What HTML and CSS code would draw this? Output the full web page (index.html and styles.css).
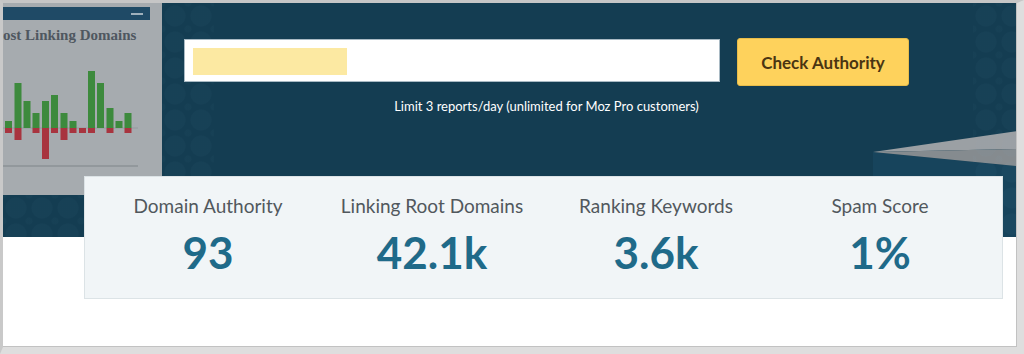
FILE: index.html
```html
<!DOCTYPE html>
<html lang="en">
<head>
<meta charset="utf-8">
<title>Domain Authority Checker</title>
<link rel="stylesheet" href="styles.css">
</head>
<body>
<div class="frame">
  <div class="page">
    <section class="banner">
      <svg class="banner-art" viewBox="3 3 1013 234" width="1013" height="234" aria-hidden="true">
        <polygon points="873,152 1017,166 1017,237 873,237" fill="#17445c"/>
        <polygon points="873,152 1017,131 1017,149" fill="#9ba0a4"/>
        <polygon points="873,152 1017,149 1017,166" fill="#858b8f"/>
      </svg>
      <div class="pattern pattern-left"></div>
      <div class="pattern pattern-under"></div>
      <div class="pattern pattern-right"></div>

      <div class="chart-panel">
        <div class="chart-head"><span class="chart-dash"></span></div>
        <div class="chart-title">ost Linking Domains</div>
        <svg class="chart" viewBox="3 42 159 153" width="159" height="153" aria-hidden="true">
          <line x1="3" y1="128" x2="138" y2="128" stroke="#959a9e" stroke-width="1"/>
          <g fill="#3d8a3d">
            <rect x="5" y="121" width="7" height="7"/>
            <rect x="14.5" y="83" width="7" height="45"/>
            <rect x="23.5" y="101" width="7" height="27"/>
            <rect x="32.5" y="113" width="7" height="15"/>
            <rect x="42" y="101" width="7" height="27"/>
            <rect x="51" y="95" width="7" height="33"/>
            <rect x="60.5" y="113" width="7" height="15"/>
            <rect x="69.5" y="121" width="7" height="7"/>
            <rect x="88" y="71" width="7" height="57"/>
            <rect x="97" y="83" width="7" height="45"/>
            <rect x="106.5" y="108" width="7" height="20"/>
            <rect x="115.5" y="121" width="7" height="7"/>
            <rect x="124.5" y="113" width="7" height="15"/>
          </g>
          <g fill="#a8343f">
            <rect x="5" y="128" width="7" height="5"/>
            <rect x="14.5" y="128" width="7" height="12"/>
            <rect x="32.5" y="128" width="7" height="5"/>
            <rect x="42" y="128" width="7" height="31"/>
            <rect x="51" y="128" width="7" height="5"/>
            <rect x="60.5" y="128" width="7" height="12"/>
            <rect x="69.5" y="128" width="7" height="5"/>
            <rect x="79" y="128" width="7" height="5"/>
            <rect x="88" y="128" width="7" height="5"/>
            <rect x="106.5" y="128" width="7" height="5"/>
            <rect x="124.5" y="128" width="7" height="5"/>
          </g>
          <line x1="3" y1="166" x2="138" y2="166" stroke="#7f8589" stroke-width="1"/>
        </svg>
      </div>

      <div class="search">
        <div class="search-row">
          <div class="search-input"><span class="redacted"></span></div>
          <button class="check-btn" type="button">Check Authority</button>
        </div>
        <p class="limit-note">Limit 3 reports/day (unlimited for Moz Pro customers)</p>
      </div>
    </section>

    <section class="metrics">
      <div class="metric">
        <div class="metric-label">Domain Authority</div>
        <div class="metric-value">93</div>
      </div>
      <div class="metric">
        <div class="metric-label">Linking Root Domains</div>
        <div class="metric-value">42.1k</div>
      </div>
      <div class="metric">
        <div class="metric-label">Ranking Keywords</div>
        <div class="metric-value">3.6k</div>
      </div>
      <div class="metric">
        <div class="metric-label">Spam Score</div>
        <div class="metric-value">1%</div>
      </div>
    </section>
  </div>
</div>
</body>
</html>
```

FILE: styles.css
```css
* { box-sizing: border-box; }

html, body {
  margin: 0;
  padding: 0;
  background: #ffffff;
}

body {
  font-family: Lato, "Open Sans", "Liberation Sans", sans-serif;
}

.frame {
  width: 1024px;
  height: 354px;
  background: #ffffff;
  border-top: 3px solid #c6c6c6;
  border-left: 3px solid #c9c9c9;
  border-right: 7px solid #dedede;
  border-bottom: 7px solid #dedede;
  overflow: hidden;
}

.page {
  width: 1014px;
  height: 344px;
  border-right: 1px solid #c2c2c2;
  border-bottom: 1px solid #c2c2c2;
  background: #ffffff;
}

/* ---------- banner ---------- */
.banner {
  position: relative;
  height: 234px;
  background: #143d52;
  display: flex;
  align-items: flex-start;
  overflow: hidden;
}

.banner-art {
  position: absolute;
  left: 0;
  top: 0;
  pointer-events: none;
}

.pattern {
  position: absolute;
  pointer-events: none;
  background-image:
    radial-gradient(circle at 50% 50%, rgba(120, 170, 200, 0.035) 0 10px, transparent 11px),
    radial-gradient(circle at 50% 50%, rgba(120, 170, 200, 0.03) 0 3px, transparent 4px);
  background-size: 26px 26px, 26px 26px;
  background-position: 0 0, 13px 13px;
}

.pattern-left {
  left: 159px;
  top: 0;
  width: 52px;
  height: 234px;
}

.pattern-under {
  left: 0;
  top: 192px;
  width: 160px;
  height: 42px;
}

.pattern-right {
  left: 970px;
  top: 0;
  width: 44px;
  height: 234px;
}

/* chart screenshot on the left */
.chart-panel {
  position: relative;
  flex: none;
  width: 159px;
  height: 192px;
  background: #a6abaf;
  overflow: hidden;
}

.chart-head {
  margin-top: 4px;
  width: 147px;
  height: 13px;
  background: #1f4a66;
  display: flex;
  justify-content: flex-end;
  align-items: center;
  padding-right: 7px;
}

.chart-dash {
  width: 12px;
  height: 2px;
  background: #9fb0bc;
}

.chart-title {
  margin-top: 8px;
  height: 14px;
  line-height: 14px;
  font-family: "Liberation Serif", "DejaVu Serif", serif;
  font-weight: 700;
  font-size: 15px;
  color: #4f5760;
  white-space: nowrap;
}

.chart {
  display: block;
}

/* search form */
.search {
  position: relative;
  flex: none;
  margin-left: 22px;
  padding-top: 35px;
  width: 725px;
}

.search-row {
  display: flex;
  align-items: flex-start;
}

.search-input {
  width: 536px;
  height: 43px;
  margin-top: 1px;
  background: #ffffff;
  border: 1px solid #a9bac4;
  padding: 8px;
}

.redacted {
  display: block;
  width: 154px;
  height: 27px;
  background: #fce9a2;
}

.check-btn {
  margin-left: 17px;
  width: 172px;
  height: 48px;
  background: #fed25c;
  border: 1px solid #e8bd4a;
  border-radius: 3px;
  font-family: Lato, "Open Sans", sans-serif;
  font-weight: 700;
  font-size: 17px;
  color: #4a3512;
  padding: 0;
  cursor: pointer;
}

.limit-note {
  margin: 13px 0 0;
  text-align: center;
  font-size: 13px;
  line-height: 15px;
  color: #ffffff;
}

/* ---------- metrics card ---------- */
.metrics {
  position: relative;
  margin-top: -61px;
  margin-left: 81px;
  width: 919px;
  height: 123px;
  background: #f1f5f7;
  border: 1px solid #dce3e6;
  padding: 18px 10px 0 11px;
  display: grid;
  grid-template-columns: repeat(4, 1fr);
}

.metric {
  text-align: center;
}

.metric-label {
  font-size: 19px;
  line-height: 22px;
  color: #51585d;
}

.metric-value {
  margin-top: 10px;
  font-size: 44px;
  line-height: 50px;
  font-weight: 700;
  color: #1f6a89;
}
```
